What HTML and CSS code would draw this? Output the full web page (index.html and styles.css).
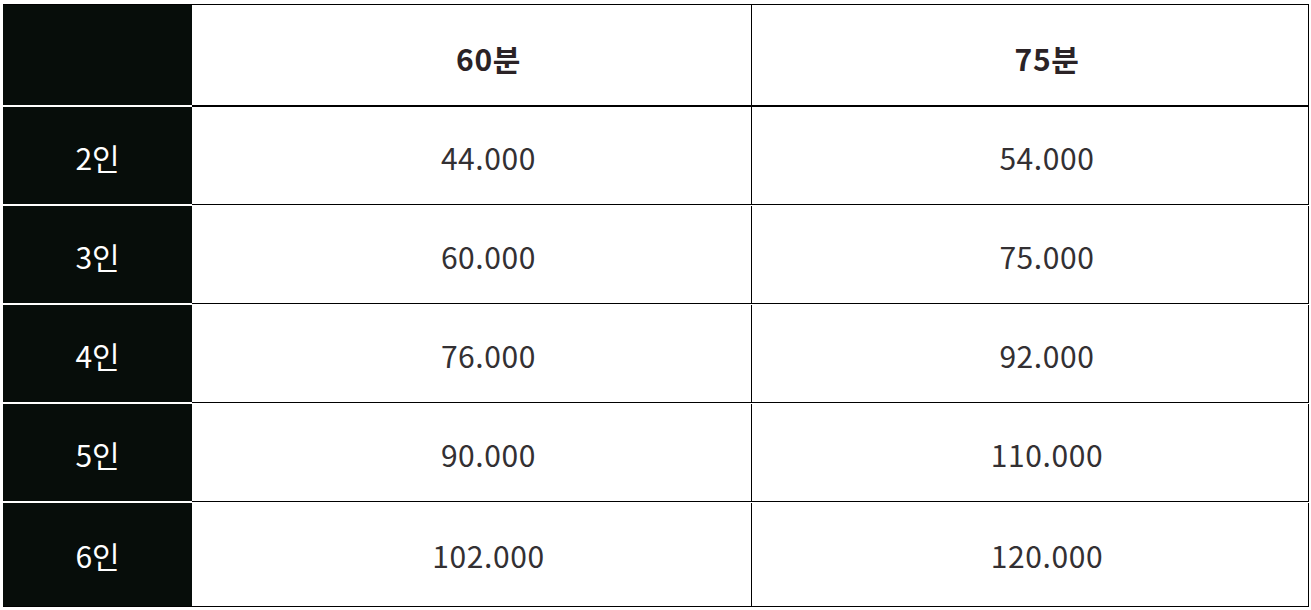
FILE: index.html
```html
<!DOCTYPE html>
<html lang="ko">
<head>
<meta charset="utf-8">
<title>요금표</title>
<link rel="stylesheet" href="styles.css">
</head>
<body>
<div class="price-table">
  <div class="c dark hdr"></div>
  <div class="c light hdr title">60분</div>
  <div class="c light hdr title last">75분</div>

  <div class="c dark">2인</div>
  <div class="c light">44.000</div>
  <div class="c light last">54.000</div>

  <div class="c dark">3인</div>
  <div class="c light">60.000</div>
  <div class="c light last">75.000</div>

  <div class="c dark">4인</div>
  <div class="c light">76.000</div>
  <div class="c light last">92.000</div>

  <div class="c dark">5인</div>
  <div class="c light">90.000</div>
  <div class="c light last">110.000</div>

  <div class="c dark end">6인</div>
  <div class="c light end">102.000</div>
  <div class="c light last end">120.000</div>
</div>
</body>
</html>
```

FILE: styles.css
```css
html, body {
  margin: 0;
  padding: 0;
  background: #ffffff;
}

body {
  font-family: "Noto Sans CJK KR", "Noto Sans", sans-serif;
}

.price-table {
  display: grid;
  grid-template-columns: 189px 560px 557px;
  grid-template-rows: 102px repeat(4, 99px) 104px;
  width: 1306px;
  margin: 4px 0 0 3px;
  border-top: 1px solid #000;
}

.c {
  display: flex;
  align-items: center;
  justify-content: center;
  box-sizing: border-box;
  font-size: 30px;
  line-height: 1;
  padding-top: 2px;
  letter-spacing: 0.6px;
}

.dark {
  background: #070d0a;
  color: #ffffff;
  border-bottom: 2px solid #ffffff;
  letter-spacing: 0;
}

.light {
  background: #ffffff;
  color: #333033;
  border-right: 1px solid #000;
  border-bottom: 1px solid #000;
  margin-bottom: 1px;
  padding-left: 34px;
}

.hdr.light {
  border-bottom: 2px solid #000;
  margin-bottom: 0;
}

.title {
  font-weight: 700;
  color: #2b2326;
  padding-top: 6px;
}

.dark.end {
  border-bottom: 1px solid #000;
}

.light.end {
  margin-bottom: 0;
}

.c.end {
  padding-top: 0;
}
```
